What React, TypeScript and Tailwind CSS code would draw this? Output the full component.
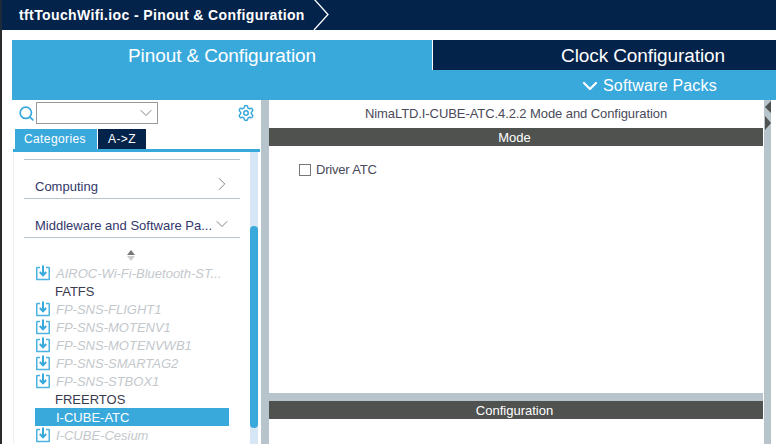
import { ChevronDown, ChevronRight, Search, Settings } from 'lucide-react';

const font = "font-['Liberation_Sans',Arial,sans-serif]";

const packs = [
  { name: 'AIROC-Wi-Fi-Bluetooth-ST...', off: true },
  { name: 'FATFS', off: false },
  { name: 'FP-SNS-FLIGHT1', off: true },
  { name: 'FP-SNS-MOTENV1', off: true },
  { name: 'FP-SNS-MOTENVWB1', off: true },
  { name: 'FP-SNS-SMARTAG2', off: true },
  { name: 'FP-SNS-STBOX1', off: true },
  { name: 'FREERTOS', off: false },
  { name: 'I-CUBE-ATC', off: false, selected: true },
  { name: 'I-CUBE-Cesium', off: true },
];

function DownloadIcon() {
  return (
    <svg width="14" height="16" viewBox="0 0 14 16" fill="none" stroke="#4cb2e0" strokeWidth="1.600" className="shrink-0">
      <path d="M4 2.500H1.500a.8.8 0 0 0-.8.8v10.400a.8.8 0 0 0 .8.8h11a.8.8 0 0 0 .8-.8V3.300a.8.8 0 0 0-.8-.8H10" />
      <path d="M7 0.500V10M3.800 7l3.200 3.400L10.200 7" strokeWidth="2" stroke="#39a9dc" />
    </svg>
  );
}

function PackRow({ name, off, selected }: { name: string; off: boolean; selected?: boolean }) {
  return (
    <div className="flex h-[18px] items-center">
      <div className="flex w-[20px] shrink-0 justify-start pl-[1px]">{off && <DownloadIcon />}</div>
      <div
        className={
          selected
            ? 'flex h-[18px] w-[194px] -ml-[20px] items-center bg-[#39a9dc] pt-[2px] pl-[21px] text-white'
            : off
              ? 'pt-[2px] pl-[1px] italic text-[#c3c8cc]'
              : 'pt-[2px] text-[#3b3b4f]'
        }
      >
        {name}
      </div>
    </div>
  );
}

export default function App() {
  return (
    <div className={`${font} flex h-[444px] w-[776px] flex-col overflow-hidden bg-white`}>
      <div className="flex h-[30px] shrink-0 items-center border-l-2 border-[#1d2a3a] bg-[#03234b]">
        <span className="ml-[17px] text-[14px] font-bold tracking-[0.38px] text-white">tftTouchWifi.ioc - Pinout &amp; Configuration</span>
        <svg width="18" height="30" viewBox="0 0 18 30" fill="none" stroke="white" strokeWidth="1.300" className="ml-[8px]">
          <path d="M1 -1 L15 14.500 L1 30" />
        </svg>
      </div>

      <div className="flex min-h-0 flex-1 border-l-2 border-[#2b2b2b] pt-[10px] pl-[10px]">
        <div className="flex min-w-0 flex-1 flex-col">
          {/* perspective tabs */}
          <div className="h-[60px] shrink-0 bg-[#39a9dc]">
            <div className="flex h-[30px]">
              <div className="flex w-[420px] items-center justify-center pt-[2px] text-[19px] tracking-[-0.1px] text-white">Pinout &amp; Configuration</div>
              <div className="flex flex-1 items-center justify-center border-l border-white bg-[#03234b] pt-[2px] pl-[77px] text-[19px] tracking-[-0.1px] text-white">Clock Configuration</div>
            </div>
            <div className="flex h-[30px] items-center pt-[1px] pl-[566px] text-[16px] text-white">
              <ChevronDown size={24} strokeWidth={2.200} className="mr-[1px]" />
              <span className="tracking-[0.2px]">Software Packs</span>
            </div>
          </div>

          <div className="flex min-h-0 flex-1">
            {/* left panel */}
            <div className="flex w-[249px] shrink-0 flex-col">
              <div className="flex h-[29px] shrink-0 items-center pb-[3px] pl-[6px]">
                <Search size={17} strokeWidth={2.400} color="#39a9dc" className="shrink-0" />
                <div className="ml-[1px] flex h-[22px] w-[122px] items-center justify-end border border-[#999] pr-[1px]">
                  <ChevronDown size={20} strokeWidth={1.100} color="#777" />
                </div>
                <Settings size={18} strokeWidth={2} color="#39a9dc" className="ml-[79px] shrink-0" />
              </div>
              <div className="flex h-[20px] shrink-0 pl-[3px] text-[12px] tracking-[0.4px] text-white">
                <div className="flex w-[82px] items-center justify-center bg-[#39a9dc] pr-[2px]">Categories</div>
                <div className="ml-[1px] flex w-[48px] items-center justify-center bg-[#03234b]">A-&gt;Z</div>
              </div>
              <div className="ml-[1px] h-[3px] w-[247px] shrink-0 bg-[#39a9dc]" />
              <div className="ml-[1px] flex min-h-0 flex-1 border-l border-[#eeeeee]">
                <div className="w-[236px] shrink-0 pl-[10px] text-[13px]">
                  <div className="mt-[7px] h-[1px] w-[216px] bg-[#b8c4cc]" />
                  <div className="flex h-[39px] w-[216px] items-end justify-between border-b border-[#b8c4cc] pr-[7px] pb-[2px] pl-[11px] text-[#33386a]">
                    <span>Computing</span>
                    <ChevronRight size={22} strokeWidth={1} color="#777" className="mb-[1px] shrink-0" />
                  </div>
                  <div className="flex h-[39px] w-[216px] items-end justify-between border-b border-[#b8c4cc] pr-[8px] pb-[2px] pl-[11px] text-[#33386a]">
                    <span className="whitespace-nowrap">Middleware and Software Pa...</span>
                    <ChevronDown size={20} strokeWidth={1.100} color="#777" className="mb-[1px] shrink-0" />
                  </div>
                  <div className="flex h-[26px] w-[216px] flex-col items-center justify-center pt-[9px] pr-[2px]">
                    <div className="h-0 w-0 border-x-[4px] border-b-[5px] border-x-transparent border-b-[#777]" />
                    <div className="mt-[1px] h-0 w-0 border-x-[4px] border-t-[5px] border-x-transparent border-t-[#ccc]" />
                  </div>
                  <div className="pl-[11px]">
                    {packs.map((p) => (
                      <PackRow key={p.name} name={p.name} off={p.off} selected={p.selected} />
                    ))}
                  </div>
                </div>
                <div className="w-[8px] shrink-0 bg-[#d6e6f4] pt-[74px]">
                  <div className="h-[202px] rounded-[4px] bg-[#39a9dc]" />
                </div>
              </div>
            </div>

            {/* splitter */}
            <div className="w-[8px] shrink-0 bg-[#b8c4cc]" />

            {/* right panel */}
            <div className="flex min-w-0 flex-1 flex-col">
              <div className="flex h-[28px] shrink-0 items-center justify-center text-[13px] tracking-[-0.08px] text-[#4a4a5a]">
                NimaLTD.I-CUBE-ATC.4.2.2 Mode and Configuration
              </div>
              <div className="flex h-[18px] shrink-0 items-center justify-center bg-[#505250] pt-[1px] pr-[3px] text-[13px] text-white">Mode</div>
              <div className="h-[247px] shrink-0 pt-[14px] pl-[30px]">
                <label className="flex items-center text-[13px] tracking-[-0.2px] text-[#4a4a5a]">
                  <span className="mr-[5px] h-[12px] w-[12px] border border-[#777]" />
                  Driver ATC
                </label>
              </div>
              <div className="h-[8px] shrink-0 bg-[#b8c4cc]" />
              <div className="flex h-[18px] shrink-0 items-center justify-center bg-[#505250] pt-[1px] pr-[3px] text-[13px] text-white">Configuration</div>
            </div>

            {/* side handle */}
            <div className="ml-[1px] w-[7px] shrink-0 bg-[#b8c4cc]">
              <div className="mt-[1px] ml-[1px] h-0 w-0 border-y-[6px] border-r-[6px] border-y-transparent border-r-[#505250]" />
              <div className="mt-[3px] ml-[1px] h-0 w-0 border-y-[7px] border-l-[6px] border-y-transparent border-l-[#505250]" />
            </div>
            <div className="w-[5px] shrink-0" />
          </div>
        </div>
      </div>
    </div>
  );
}
